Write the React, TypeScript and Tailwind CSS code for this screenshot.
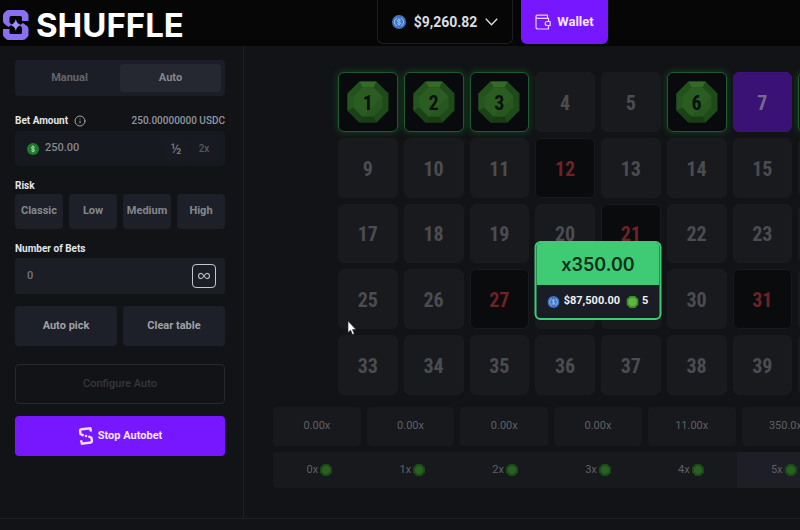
import React, { useState } from 'react';
import { Info } from 'lucide-react';
import clsx from 'clsx';

const HITS = [1, 2, 3, 6, 8];
const PICKED = [7];
const MISSES = [12, 21, 27, 31];
const RISKS = ['Classic', 'Low', 'Medium', 'High'];
const PAYOUTS = ['0.00x', '0.00x', '0.00x', '0.00x', '11.00x', '350.0x', '710.0x'];
const TILES = Array.from({ length: 40 }, (_, i) => i + 1);

function LogoMark() {
  return (
    <svg width="28" height="30" viewBox="0 0 28 30" fill="#8a70ee">
      <path d="M7 0H21Q22.500 0 23.500 1L25.500 3Q26.500 4 26.500 5.500V11H20V7.500Q20 6 18.500 6H9Q7.500 6 7.500 7.500V12.500L9.500 14.500L6.500 17L2.500 14Q1 12.800 1 11V5.500Q1 4 2 3L4 1Q5 0 7 0Z" />
      <path d="M20.500 30H6.500Q5 30 4 29L2 27Q1 26 1 24.500V19H7.500V22.500Q7.500 24 9 24H18.500Q20 24 20 22.500V17.500L18 15.500L21 13L25 16Q26.500 17.200 26.500 19V24.500Q26.500 26 25.500 27L23.500 29Q22.500 30 20.500 30Z" />
      <path d="M13.800 9Q14.600 14.200 19.500 15Q14.600 15.800 13.800 21Q13 15.800 8 15Q13 14.200 13.800 9Z" fill="#a48dff" />
    </svg>
  );
}

function SpinnerMark() {
  return (
    <svg width="16" height="20" viewBox="0 0 16 20" fill="none" stroke="#f6dcff" strokeWidth="2.400">
      <path d="M13 5.500L12.300 2.300L3.500 3.300Q1.900 3.600 2.100 5.200L2.500 8L5.600 9.600" />
      <path d="M3 14.300L3.900 17.700L12.500 16.500Q14.100 16.100 13.900 14.600L13.400 11.800L10.400 10.300" />
      <circle cx="8" cy="10" r="1.300" fill="#f6dcff" stroke="none" />
    </svg>
  );
}

function WalletIcon() {
  return (
    <svg width="16" height="16" viewBox="0 0 16 16" fill="none" stroke="#e9d5ff" strokeWidth="1.200">
      <path d="M12.500 4.300V1.200H2.200Q1 1.200 1 2.500V13Q1 15 3 15H13.500V11.500" strokeLinejoin="round" />
      <path d="M1 3.200Q1.200 4.300 3 4.300H13.500V7.500" strokeLinejoin="round" />
      <path d="M15.200 7.500H12.200A2 2 0 0 0 12.200 11.500H15.200Z" strokeLinejoin="round" />
    </svg>
  );
}

function UsdcCoin({ size }: { size: number }) {
  return (
    <svg width={size} height={size} viewBox="0 0 16 16" fill="none">
      <circle cx="8" cy="8" r="8" fill="#3f74c4" />
      <path d="M5.800 3.400A5 5 0 0 0 5.800 12.600M10.200 3.400A5 5 0 0 1 10.200 12.600" stroke="#9fbfee" strokeWidth="1.100" />
      <path d="M10 6.500Q9.800 5.300 8 5.300T6 6.600Q6 7.700 8 8T10 9.500Q10 10.800 8 10.800T6 9.500M8 4V12" stroke="#9fbfee" strokeWidth="1.100" />
    </svg>
  );
}

function DollarCoin() {
  return (
    <svg width="12" height="12" viewBox="0 0 12 12" fill="none">
      <circle cx="6" cy="6" r="6" fill="#1f7a2c" />
      <path d="M7.600 4.600Q7.400 3.600 6 3.600T4.400 4.700Q4.400 5.700 6 6T7.600 7.300Q7.600 8.400 6 8.400T4.400 7.400M6 2.600V9.400" stroke="#a9d8ac" />
    </svg>
  );
}

function Gem() {
  return (
    <svg width="42" height="42" viewBox="0 0 42 42" className="col-start-1 row-start-1">
      <path d="M12.500 0.500H29.500L41.500 12.500V29.500L29.500 41.500H12.500L0.500 29.500V12.500Z" fill="#1f4a19" />
      <path d="M12.500 0.500H29.500L26.500 6.500H15.500Z" fill="#356b28" />
      <path d="M0.500 12.500L12.500 0.500L15.500 6.500L6.500 15.500Z" fill="#24521d" />
      <path d="M0.500 12.500L6.500 15.500V26.500L0.500 29.500Z" fill="#265620" />
      <path d="M0.500 29.500L6.500 26.500L15.500 35.500L12.500 41.500Z" fill="#1b4217" />
      <path d="M12.500 41.500L15.500 35.500H26.500L29.500 41.500Z" fill="#193c15" />
      <path d="M15.500 6.500H26.500L35.500 15.500V26.500L26.500 35.500H15.500L6.500 26.500V15.500Z" fill="#27571f" />
      <path d="M15.500 6.500L6.500 15.500V26.500L15.500 35.500L35.500 15.500L26.500 6.500Z" fill="#2b5d23" />
    </svg>
  );
}

function GemDot({ bright = false }: { bright?: boolean }) {
  return (
    <svg width="12" height="12" viewBox="0 0 12 12">
      <path d="M3.500 0H8.500L12 3.500V8.500L8.500 12H3.500L0 8.500V3.500Z" fill={bright ? '#3c9426' : '#1a4b17'} />
      <path d="M4.200 2H7.800L10 4.200V7.800L7.800 10H4.200L2 7.800V4.200Z" fill={bright ? '#62b540' : '#286123'} />
    </svg>
  );
}

function Tile({ value }: { value: number }) {
  const hit = HITS.includes(value);
  const picked = PICKED.includes(value);
  const miss = MISSES.includes(value);
  return (
    <button
      type="button"
      className={clsx(
        'grid aspect-square place-items-center rounded-md border font-["Liberation_Sans_Narrow","Roboto_Condensed","Liberation_Sans",sans-serif] text-xl leading-none font-bold',
        hit && 'border-[#1f5a30] bg-[#090a0d] text-[#08110b] shadow-[0_0_6px_1px_#123d1c]',
        picked && 'border-[#3c1378] bg-[#3a1175] text-[#77698d]',
        miss && 'border-[#191a1e] bg-[#0a0b0d] text-[#6e2227]',
        !hit && !picked && !miss && 'border-[#1a1b1f] bg-[#191a1e] text-[#4b4c50]'
      )}
    >
      {hit && <Gem />}
      <span className="col-start-1 row-start-1 pt-0.5">{value}</span>
    </button>
  );
}

function Header() {
  return (
    <header className="grid h-[46px] min-w-[985px] grid-cols-[1fr_auto_1fr] items-center bg-[#060607]">
      <a href="#" className="flex items-center gap-1.5 pt-1 pl-0.5 text-white">
        <LogoMark />
        <span className="font-[Inter,sans-serif] text-[33px] leading-none font-bold">SHUFFLE</span>
      </a>
      <div className="flex h-full gap-2 pb-0.5">
        <button
          type="button"
          className="flex w-[136px] items-center justify-center gap-2 rounded-b-md border border-t-0 border-[#1d1e21] text-sm font-bold text-[#dcdde0]"
        >
          <UsdcCoin size={14} />
          $9,260.82
          <svg width="13" height="8" viewBox="0 0 13 8" fill="none" stroke="currentColor" strokeWidth="1.400">
            <path d="M0.800 0.800L6.500 6.800L12.200 0.800" />
          </svg>
        </button>
        <button
          type="button"
          className="flex w-[87px] items-center justify-center gap-1.5 rounded-b-md bg-[#7717ff] text-[13px] font-bold text-[#f3e6ff]"
        >
          <WalletIcon />
          Wallet
        </button>
      </div>
    </header>
  );
}

function Sidebar() {
  const [amount, setAmount] = useState('250.00');
  const [bets, setBets] = useState('0');

  return (
    <aside className="flex w-[244px] shrink-0 flex-col border-r border-[#1e2025] py-3.5 pr-[18px] pl-[15px] text-[11px] font-bold text-[#85878c]">
      <div className="grid h-9 grid-cols-2 rounded bg-[#1b1e26] p-1">
        <button type="button" className="text-[#64666c]">Manual</button>
        <button type="button" className="rounded bg-[#252831]">Auto</button>
      </div>

      <div className="mt-[18px] mb-1 flex h-[13px] items-center justify-between text-[10px]">
        <label htmlFor="amount" className="flex items-center gap-1.5 text-[#e4e5e7]">
          Bet Amount
          <Info size={12} className="text-[#a3a5a9]" />
        </label>
        <span className="font-medium text-[#8f97a3]">250.00000000 USDC</span>
      </div>
      <div className="flex h-[35px] items-center rounded bg-[#171920] pr-2 pl-3">
        <DollarCoin />
        <input
          id="amount"
          value={amount}
          onChange={(e) => setAmount(e.target.value)}
          className="ml-1.5 min-w-0 flex-1 bg-transparent font-medium outline-none"
        />
        <button type="button" className="h-6 w-[26px] rounded bg-[#181a21] text-sm font-medium text-[#76787d]">½</button>
        <button type="button" className="ml-0.5 h-6 w-[26px] rounded bg-[#181a21] text-[10px] font-medium text-[#55575d]">2x</button>
      </div>

      <p className="mt-[13px] mb-0.5 h-[13px] text-[10px] leading-[13px] text-[#e4e5e7]">Risk</p>
      <div className="grid grid-cols-4 gap-1.5">
        {RISKS.map((risk) => (
          <button key={risk} type="button" className="h-[35px] rounded bg-[#1d2029]">
            {risk}
          </button>
        ))}
      </div>

      <label htmlFor="bets" className="mt-[13px] mb-[3px] h-[13px] text-[10px] leading-[13px] text-[#e4e5e7]">
        Number of Bets
      </label>
      <div className="flex h-9 items-center rounded bg-[#1b1e25] pr-[9px] pl-3">
        <input
          id="bets"
          value={bets}
          onChange={(e) => setBets(e.target.value)}
          className="min-w-0 flex-1 bg-transparent font-medium text-[#77797e] outline-none"
        />
        <button
          type="button"
          aria-label="Unlimited bets"
          className="grid size-6 place-items-center rounded border border-[#c5c6c9] text-[#b5b7ba]"
        >
          <svg width="12" height="8" viewBox="0 0 12 8" fill="none" stroke="currentColor" strokeWidth="1.200">
            <path d="M6 4C4.800 2.200 4.200 1.400 3.100 1.400A2.600 2.600 0 0 0 3.100 6.600C4.200 6.600 4.800 5.800 6 4S7.800 1.400 8.900 1.400A2.600 2.600 0 0 1 8.900 6.600C7.800 6.600 7.200 5.800 6 4Z" />
          </svg>
        </button>
      </div>

      <div className="mt-3 grid grid-cols-2 gap-1.5">
        <button type="button" className="h-10 rounded bg-[#1d2029] text-[#a0a2a6]">Auto pick</button>
        <button type="button" className="h-10 rounded bg-[#1d2029] text-[#a0a2a6]">Clear table</button>
      </div>
      <button type="button" className="mt-[18px] h-10 rounded border border-[#27282b] font-medium text-[#36373b]">
        Configure Auto
      </button>
      <button
        type="button"
        className="mt-3 flex h-10 items-center justify-center gap-1 rounded bg-[#7717ff] text-[#f3e6ff]"
      >
        <SpinnerMark />
        Stop Autobet
      </button>
    </aside>
  );
}

function WinPopup() {
  return (
    <div className="absolute top-[169px] left-1/2 w-[127px] -translate-x-1/2 overflow-hidden rounded-md border-2 border-[#3ecb74] bg-[#1b1d26]">
      <p className="bg-[#3ecb74] pt-0.5 text-center font-[Inter,sans-serif] text-lg leading-10 font-semibold text-[#0b2f19]">
        x350.00
      </p>
      <div className="flex h-[33px] items-center justify-center gap-1 text-[11px] font-bold text-[#f0f1f3]">
        <UsdcCoin size={12} />
        <span className="pr-0.5">$87,500.00</span>
        <GemDot bright />
        <span>5</span>
      </div>
    </div>
  );
}

function Board() {
  return (
    <main className="flex min-w-[708px] flex-1 justify-center pt-[26px] pb-[30px]">
      <div className="w-[650px]">
        <div className="relative mx-auto w-[520px]">
          <div className="grid grid-cols-8 gap-1.5">
            {TILES.map((n) => (
              <Tile key={n} value={n} />
            ))}
          </div>
          <WinPopup />
        </div>

        <div className="mt-3 grid grid-cols-7 gap-1.5 text-[11px] text-[#5f6065]">
          {PAYOUTS.map((payout, i) => (
            <div key={i} className="grid h-[39px] place-items-center rounded bg-[#18191d]">
              {payout}
            </div>
          ))}
        </div>
        <div className="mt-1.5 grid h-9 grid-cols-7 overflow-hidden rounded bg-[#18191d] text-[11px] text-[#5f6065]">
          {PAYOUTS.map((_, i) => (
            <div key={i} className={clsx('flex items-center justify-center gap-0.5', i === 5 && 'bg-[#1d1e26]')}>
              {i}x
              <GemDot />
            </div>
          ))}
        </div>
      </div>
    </main>
  );
}

export default function App() {
  return (
    <div className="relative min-h-screen overflow-hidden bg-[#121317] font-[Roboto,'Liberation_Sans',sans-serif]">
      <Header />
      <div className="flex border-b border-[#1e1f23]">
        <Sidebar />
        <Board />
      </div>
      <svg width="10" height="16" viewBox="0 0 10 16" className="absolute top-[320px] left-[347px]">
        <path d="M1 1V12.500L3.600 10.200L5.400 14.600L7.300 13.800L5.500 9.600H9Z" fill="#fff" stroke="#222" strokeWidth="0.600" />
      </svg>
    </div>
  );
}
